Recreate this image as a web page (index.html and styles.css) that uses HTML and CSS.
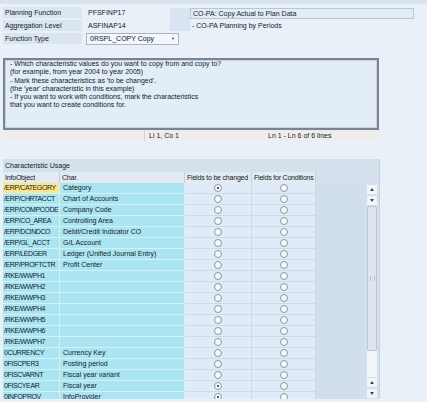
FILE: index.html
```html
<!DOCTYPE html>
<html>
<head>
<meta charset="utf-8">
<link rel="stylesheet" href="styles.css">
</head>
<body>
<div class="topstrip"></div>
<div class="form">
  <div class="form-left">
    <div class="frow"><span class="flabel">Planning Function</span><span class="fvalue">PFSFINP17</span></div>
    <div class="frow"><span class="flabel">Aggregation Level</span><span class="fvalue">ASFINAP14</span></div>
    <div class="frow"><span class="flabel">Function Type</span>
      <span class="dropdown">0RSPL_COPY Copy<span class="arrow">&#9660;</span></span></div>
  </div>
  <div class="form-right">
    <div class="bluebox"></div>
    <div class="desc">
      <div class="descbox">CO-PA: Copy Actual to Plan Data</div>
      <div class="desctext">- CO-PA Planning by Periods</div>
    </div>
  </div>
</div>

<div class="editor">
  <div class="textarea">- Which characteristic values do you want to copy from and copy to?
(for example, from year 2004 to year 2005)
- Mark these characteristics as 'to be changed'.
(the 'year' characteristic in this example)
- If you want to work with conditions, mark the characteristics
that you want to create conditions for.</div>
  <div class="status">
    <div class="scell s1"></div>
    <div class="scell s2">Li 1, Co 1</div>
    <div class="scell s3">Ln 1 - Ln 6 of 6 lines</div>
  </div>
</div>

<div class="panel">
  <div class="ptitle">Characteristic Usage</div>
  <div class="thead">
    <div class="hcell c1">InfoObject</div>
    <div class="hcell c2">Char.</div>
    <div class="hcell c3">Fields to be changed</div>
    <div class="hcell c4">Fields for Conditions</div>
  </div>
  <div class="pbody">
    <div class="rows">
      <div class="row"><div class="cell c1 sel">/ERP/CATEGORY</div><div class="cell c2">Category</div><div class="cell c3"><span class="radio on"></span></div><div class="cell c4"><span class="radio"></span></div></div>
      <div class="row"><div class="cell c1">/ERP/CHRTACCT</div><div class="cell c2">Chart of Accounts</div><div class="cell c3"><span class="radio"></span></div><div class="cell c4"><span class="radio"></span></div></div>
      <div class="row"><div class="cell c1">/ERP/COMPCODE</div><div class="cell c2">Company Code</div><div class="cell c3"><span class="radio"></span></div><div class="cell c4"><span class="radio"></span></div></div>
      <div class="row"><div class="cell c1">/ERP/CO_AREA</div><div class="cell c2">Controlling Area</div><div class="cell c3"><span class="radio"></span></div><div class="cell c4"><span class="radio"></span></div></div>
      <div class="row"><div class="cell c1">/ERP/DCINDCO</div><div class="cell c2">Debit/Credit Indicator CO</div><div class="cell c3"><span class="radio"></span></div><div class="cell c4"><span class="radio"></span></div></div>
      <div class="row"><div class="cell c1">/ERP/GL_ACCT</div><div class="cell c2">G/L Account</div><div class="cell c3"><span class="radio"></span></div><div class="cell c4"><span class="radio"></span></div></div>
      <div class="row"><div class="cell c1">/ERP/LEDGER</div><div class="cell c2">Ledger (Unified Journal Entry)</div><div class="cell c3"><span class="radio"></span></div><div class="cell c4"><span class="radio"></span></div></div>
      <div class="row"><div class="cell c1">/ERP/PROFTCTR</div><div class="cell c2">Profit Center</div><div class="cell c3"><span class="radio"></span></div><div class="cell c4"><span class="radio"></span></div></div>
      <div class="row"><div class="cell c1">/RKE/WWPH1</div><div class="cell c2"></div><div class="cell c3"><span class="radio"></span></div><div class="cell c4"><span class="radio"></span></div></div>
      <div class="row"><div class="cell c1">/RKE/WWPH2</div><div class="cell c2"></div><div class="cell c3"><span class="radio"></span></div><div class="cell c4"><span class="radio"></span></div></div>
      <div class="row"><div class="cell c1">/RKE/WWPH3</div><div class="cell c2"></div><div class="cell c3"><span class="radio"></span></div><div class="cell c4"><span class="radio"></span></div></div>
      <div class="row"><div class="cell c1">/RKE/WWPH4</div><div class="cell c2"></div><div class="cell c3"><span class="radio"></span></div><div class="cell c4"><span class="radio"></span></div></div>
      <div class="row"><div class="cell c1">/RKE/WWPH5</div><div class="cell c2"></div><div class="cell c3"><span class="radio"></span></div><div class="cell c4"><span class="radio"></span></div></div>
      <div class="row"><div class="cell c1">/RKE/WWPH6</div><div class="cell c2"></div><div class="cell c3"><span class="radio"></span></div><div class="cell c4"><span class="radio"></span></div></div>
      <div class="row"><div class="cell c1">/RKE/WWPH7</div><div class="cell c2"></div><div class="cell c3"><span class="radio"></span></div><div class="cell c4"><span class="radio"></span></div></div>
      <div class="row"><div class="cell c1">0CURRENCY</div><div class="cell c2">Currency Key</div><div class="cell c3"><span class="radio"></span></div><div class="cell c4"><span class="radio"></span></div></div>
      <div class="row"><div class="cell c1">0FISCPER3</div><div class="cell c2">Posting period</div><div class="cell c3"><span class="radio"></span></div><div class="cell c4"><span class="radio"></span></div></div>
      <div class="row"><div class="cell c1">0FISCVARNT</div><div class="cell c2">Fiscal year variant</div><div class="cell c3"><span class="radio"></span></div><div class="cell c4"><span class="radio"></span></div></div>
      <div class="row"><div class="cell c1">0FISCYEAR</div><div class="cell c2">Fiscal year</div><div class="cell c3"><span class="radio on"></span></div><div class="cell c4"><span class="radio"></span></div></div>
      <div class="row"><div class="cell c1">0INFOPROV</div><div class="cell c2">InfoProvider</div><div class="cell c3"><span class="radio on"></span></div><div class="cell c4"><span class="radio"></span></div></div>
    </div>
    <div class="empty"></div>
    <div class="sbwrap">
      <div class="scrollbar">
        <div class="sbtn"><span class="up"></span></div>
        <div class="sbtn"><span class="down"></span></div>
        <div class="thumb"><span class="grip"></span></div>
        <div class="track"></div>
        <div class="sbtn"><span class="up"></span></div>
        <div class="sbtn"><span class="down"></span></div>
      </div>
    </div>
  </div>
</div>
</body>
</html>
```
FILE: styles.css
```css
html, body {
  margin: 0;
  padding: 0;
}
body {
  width: 427px;
  height: 402px;
  overflow: hidden;
  background: #eaf0f7;
  font-family: "Liberation Sans", Arial, sans-serif;
  font-size: 7px;
  color: #101c2a;
}
.topstrip {
  height: 4px;
  background: #d9e3ee;
}
.form {
  display: flex;
  padding: 3px 0 0 3px;
}
.form-left {
  width: 167px;
  flex: none;
}
.frow {
  display: flex;
  align-items: center;
  height: 11px;
  margin-bottom: 2px;
  white-space: nowrap;
}
.flabel {
  width: 77px;
  height: 11px;
  line-height: 11px;
  padding-left: 2px;
  background: #dbe5f0;
  flex: none;
}
.fvalue {
  padding-left: 6px;
}
.dropdown {
  position: relative;
  flex: none;
  margin-left: 4px;
  width: 88px;
  height: 10px;
  line-height: 10px;
  padding-left: 3px;
  border: 1px solid #a9b5c2;
  background: #f3f6fa;
}
.arrow {
  position: absolute;
  right: 3px;
  top: 0;
  font-size: 4px;
  color: #3c4a5a;
}
.form-right {
  display: flex;
  margin-top: 1px;
}
.bluebox {
  width: 20px;
  height: 23px;
  background: #d8e4f1;
}
.desc {
  display: flex;
  flex-direction: column;
}
.descbox {
  width: 220px;
  height: 9px;
  line-height: 9px;
  padding-left: 2px;
  border: 1px solid #b8c7d6;
  background: #e2ecf7;
}
.desctext {
  padding-left: 2px;
  margin-top: 2px;
  line-height: 9px;
}

.editor {
  margin: 12px 0 0 3px;
  width: 376px;
}
.textarea {
  height: 68px;
  border: 2px solid #7a8490;
  background: #e3edf8;
  box-shadow: inset 0 0 0 1px #c8d3df;
  padding: 0 0 0 5px;
  white-space: pre;
  line-height: 8.3px;
  box-sizing: content-box;
  width: 367px;
}
.status {
  display: flex;
  height: 11px;
  line-height: 11px;
  background: #efedeb;
}
.scell {
  height: 11px;
}
.s1 {
  width: 141px;
  border-right: 1px solid #d3d6da;
}
.s2 {
  width: 117px;
  padding-left: 4px;
}
.s3 {
  padding-left: 2px;
}

.panel {
  margin: 18px 0 0 3px;
  width: 376px;
  height: 240px;
  background: #d4e1ed;
  border-right: 1px solid #c6d4e1;
  overflow: hidden;
}
.ptitle {
  height: 13px;
  line-height: 14px;
  padding-left: 2px;
}
.thead {
  display: flex;
  height: 11px;
  line-height: 11px;
}
.hcell {
  background: #e3eaf1;
  border-right: 1px solid #c3cfdb;
  box-sizing: border-box;
  padding-left: 2px;
  white-space: nowrap;
  overflow: hidden;
  letter-spacing: -0.2px;
}
.c1 { width: 57px; flex: none; }
.c2 { width: 125px; flex: none; }
.c3 { width: 67px; flex: none; }
.c4 { width: 64px; flex: none; }
.pbody {
  display: flex;
  height: 216px;
}
.rows {
  width: 313px;
  flex: none;
}
.row {
  display: flex;
  height: 11px;
}
.cell {
  box-sizing: border-box;
  height: 11px;
  line-height: 10px;
  white-space: nowrap;
  overflow: hidden;
  border-bottom: 1px solid #c8dde9;
  border-right: 1px solid #c8dde9;
}
.cell.c1, .cell.c2 {
  background: #ace5f2;
  border-bottom-color: #d4f1f8;
  border-right-color: #d4f1f8;
  padding-left: 2px;
}
.cell.c1 {
  letter-spacing: -0.4px;
  padding-left: 1px;
}
.cell.c2 {
  padding-left: 3px;
}
.cell.sel {
  background: #ffe58a;
}
.cell.c3, .cell.c4 {
  background: #dfebf7;
  display: flex;
  align-items: center;
  justify-content: center;
}
.radio {
  width: 6px;
  height: 6px;
  border-radius: 50%;
  border: 1px solid #8995a2;
  background: #f7f9fb;
  position: relative;
  margin-top: -1px;
}
.radio.on::after {
  content: "";
  position: absolute;
  left: 2px;
  top: 2px;
  width: 2px;
  height: 2px;
  border-radius: 50%;
  background: #222;
}
.empty {
  width: 49px;
  flex: none;
  background: #d1dfec;
}
.sbwrap {
  width: 14px;
  flex: none;
  padding-left: 2px;
  padding-top: 2px;
}
.scrollbar {
  width: 10px;
  display: flex;
  flex-direction: column;
}
.sbtn {
  height: 9px;
  margin-bottom: 2px;
  background: #f2f5f8;
  display: flex;
  align-items: center;
  justify-content: center;
}
.up, .down {
  width: 0;
  height: 0;
  border-left: 2.5px solid transparent;
  border-right: 2.5px solid transparent;
}
.up { border-bottom: 3px solid #3d4c5c; }
.down { border-top: 3px solid #3d4c5c; }
.thumb {
  height: 145px;
  margin-top: -1px;
  background: #dde6ef;
  border: 1px solid #b9c6d3;
  border-radius: 2px;
  box-sizing: border-box;
  display: flex;
  align-items: center;
  justify-content: center;
}
.grip {
  width: 3px;
  height: 5px;
  border-left: 1px solid #b6c2ce;
  border-right: 1px solid #b6c2ce;
}
.track {
  height: 26px;
  background: #f3f6f9;
  margin-bottom: 1px;
}
```
